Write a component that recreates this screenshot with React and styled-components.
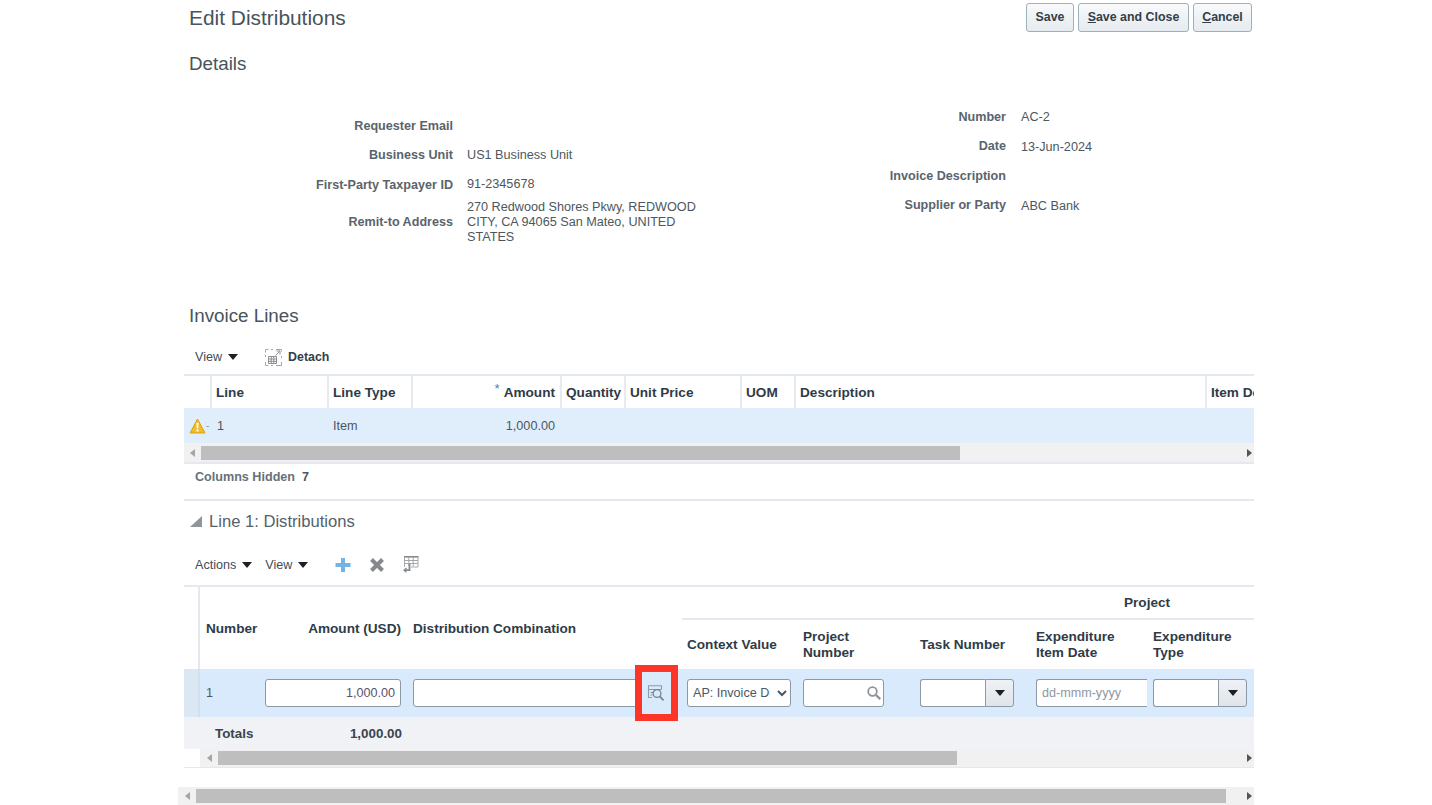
import React from 'react'
import styled, { createGlobalStyle } from 'styled-components'

const GlobalStyle = createGlobalStyle`
  html, body {
    margin: 0;
    background: #fff;
    overflow: hidden;
  }
  body {
    font-family: "Liberation Sans", Arial, sans-serif;
  }
`

const Page = styled.div`
  position: relative;
  width: 1070px;
  height: 805px;
  margin-left: 184px;
`

const Header = styled.header`
  display: flex;
  align-items: flex-start;
  justify-content: space-between;
  height: 36px;
  padding: 3px 2px 0 5px;
  box-sizing: border-box;
`

const Title = styled.h1`
  margin: 0;
  font-size: 20.9px;
  line-height: 30px;
  font-weight: 400;
  color: #48535c;
`

const ButtonRow = styled.div`
  display: flex;
  gap: 4px;
`

const Button = styled.button`
  width: ${p => p.$width}px;
  height: 29px;
  padding: 0 0 1px;
  border: 1px solid #9fb0bd;
  border-radius: 3px;
  background: linear-gradient(#f8fafb, #e6ebef);
  color: #333e48;
  font: 700 12.4px "Liberation Sans", Arial, sans-serif;
  u { text-decoration: underline; }
`

const SectionTitle = styled.h2`
  display: flex;
  align-items: center;
  height: 28px;
  margin: ${p => p.$top || 0}px 0 0;
  padding-left: 5px;
  font-size: 18.8px;
  font-weight: 400;
  color: #48535c;
`

const FormGrid = styled.div`
  display: flex;
  height: 200px;
  margin-top: 24px;
`

const FormColumn = styled.div`
  display: grid;
  grid-template-columns: ${p => p.$label}px ${p => p.$value}px;
  grid-auto-rows: min-content;
  column-gap: ${p => p.$gap || 14}px;
  padding-top: ${p => p.$top || 0}px;
  align-items: center;
`

const FormLabel = styled.div`
  min-height: 29.5px;
  display: flex;
  align-items: center;
  justify-content: flex-end;
  font-size: 12.6px;
  font-weight: 700;
  color: #5a646c;
`

const FormValue = styled.div`
  padding-top: ${p => p.$drop || 0}px;
  font-size: 12.65px;
  line-height: 15px;
  color: #4c5760;
`

const Toolbar = styled.div`
  display: flex;
  align-items: center;
  height: 34px;
  margin-top: ${p => p.$top || 0}px;
  padding-left: 11px;
  font-size: 12.6px;
  color: #414d57;
`

const MenuItem = styled.span`
  display: inline-flex;
  align-items: center;
  margin-right: ${p => p.$gap || 13}px;
  &::after {
    content: '';
    margin-left: ${p => p.$arrow || 6}px;
    border-left: 5px solid transparent;
    border-right: 5px solid transparent;
    border-top: 6px solid #1d1f22;
  }
`

const ToolLabel = styled.span`
  margin-left: 6px;
  font-weight: 700;
  font-size: 12.4px;
  color: #333e48;
`

const ToolIcon = styled.svg`
  display: block;
  flex: none;
  margin-right: ${p => p.$gap || 0}px;
`

const InvoiceTable = styled.div`
  border-top: 2px solid #e3e9ee;
`

const invoiceColumns = '26px 117px 84px 149px 64px 116px 54px 411px 49px'

const InvoiceHead = styled.div`
  display: grid;
  grid-template-columns: ${invoiceColumns};
  height: 32px;
  overflow: hidden;
`

const HeadCell = styled.div`
  display: flex;
  align-items: center;
  justify-content: ${p => (p.$right ? 'flex-end' : 'flex-start')};
  padding: 0 5px 0 ${p => p.$pad ?? 4}px;
  border-left: ${p => (p.$first ? 0 : '2px solid #e6ebf0')};
  font-size: 13.6px;
  font-weight: 700;
  color: #2f3b47;
  white-space: nowrap;
  overflow: hidden;
`

const Star = styled.span`
  margin: 0 4px 8px 0;
  color: #3d8ac9;
  font-size: 13px;
  font-weight: 400;
  line-height: 1;
`

const InvoiceRow = styled.div`
  display: grid;
  grid-template-columns: ${invoiceColumns};
  align-items: center;
  height: 35px;
  background: #e0edfa;
`

const BodyCell = styled.div`
  padding: 0 5px 0 ${p => p.$pad ?? 5}px;
  text-align: ${p => (p.$right ? 'right' : 'left')};
  font-size: 12.65px;
  color: #4c5760;
`

const WarnCell = styled.div`
  display: flex;
  align-items: center;
  padding-left: 5px;
  color: #8a96a0;
  font-size: 10px;
`

const ScrollTrack = styled.div`
  display: flex;
  align-items: center;
  height: ${p => p.$height || 18}px;
  margin-left: ${p => p.$left || 0}px;
  background: #f1f1f1;
`

const ScrollArrow = styled.span`
  flex: none;
  display: flex;
  justify-content: center;
  width: ${p => p.$width}px;
  margin-left: ${p => (p.$push ? 'auto' : 0)};
  &::before {
    content: '';
    border-top: 4px solid transparent;
    border-bottom: 4px solid transparent;
    border-${p => (p.$dir === 'left' ? 'right' : 'left')}: 5px solid ${p => (p.$dir === 'left' ? '#a5a5a5' : '#555')};
  }
`

const ScrollThumb = styled.span`
  flex: none;
  width: ${p => p.$width}px;
  height: 14px;
  background: #bebebe;
`

const TableEnd = styled.div`
  border-top: ${p => p.$size || 2}px solid #e3e9ee;
`

const HiddenNote = styled.div`
  display: flex;
  align-items: center;
  height: 26px;
  padding: 0 0 9px 11px;
  margin-bottom: 5px;
  border-bottom: 2px solid #e3e9ee;
  font-size: 12.6px;
  font-weight: 700;
  color: #66717a;
  span { margin-left: 7px; color: #4c5760; }
`

const CollapseTitle = styled.div`
  display: flex;
  align-items: center;
  box-sizing: border-box;
  height: 30px;
  padding: 1px 0 0 6px;
  font-size: 16.6px;
  color: #56616a;
`

const CollapseArrow = styled.span`
  width: 0;
  height: 0;
  margin-right: 7px;
  border-left: 12px solid transparent;
  border-bottom: 11px solid #8e959b;
`

const distColumns = '16px 62px 145px 275px 116px 117px 116px 117px 106px'

const DistTable = styled.div`
  margin-top: 3px;
  border-top: 2px solid #e3e9ee;
`

const DistHead = styled.div`
  display: grid;
  grid-template-columns: ${distColumns};
  grid-template-rows: 33px 49px;
`

const SelectHeadGap = styled.div`
  grid-row: 1 / 3;
  border-right: 2px solid #e3e9ee;
`

const TallHead = styled.div`
  grid-row: 1 / 3;
  display: flex;
  align-items: center;
  justify-content: ${p => (p.$right ? 'flex-end' : 'flex-start')};
  padding: 0 ${p => (p.$right ? 6 : 0)}px 0 6px;
  font-size: 13.6px;
  font-weight: 700;
  color: #2f3b47;
`

const GroupHead = styled.div`
  grid-column: 5 / 10;
  display: flex;
  align-items: center;
  padding-left: 442px;
  border-bottom: 2px solid #e3e9ee;
  font-size: 13.6px;
  font-weight: 700;
  color: #2f3b47;
`

const SubHead = styled.div`
  display: flex;
  align-items: center;
  padding: 1px 2px 0 5px;
  font-size: 13.6px;
  line-height: 16px;
  font-weight: 700;
  color: #2f3b47;
`

const DistRow = styled.div`
  display: grid;
  grid-template-columns: ${distColumns};
  align-items: center;
  height: 48px;
  background: #d8eafb;
`

const SelectCell = styled.div`
  height: 100%;
  background: #dbe7f3;
  border-right: 2px solid #d3e0eb;
  box-sizing: border-box;
`

const RowNumber = styled.div`
  padding-left: 6px;
  font-size: 12.65px;
  color: #4c5760;
`

const FieldCell = styled.div`
  display: flex;
  align-items: center;
  padding-left: ${p => p.$pad ?? 5}px;
`

const TextInput = styled.input`
  box-sizing: border-box;
  width: ${p => p.$width}px;
  height: 28px;
  padding: 0 5px;
  border: 1px solid #8b9aa6;
  border-right: ${p => (p.$open ? 0 : '1px solid #8b9aa6')};
  border-radius: ${p => (p.$open ? '3px 0 0 3px' : '3px')};
  background: #fff;
  font: 12.6px "Liberation Sans", Arial, sans-serif;
  color: #5b5266;
  text-align: ${p => (p.$right ? 'right' : 'left')};
  &::placeholder { color: #8f979e; opacity: 1; }
`

const NativeSelect = styled.select`
  box-sizing: border-box;
  width: 104px;
  height: 28px;
  padding: 0 4px 0 1px;
  border: 1px solid #8b9aa6;
  border-radius: 3px;
  background: #fff;
  font: 12.6px "Liberation Sans", Arial, sans-serif;
  color: #4c5760;
`

const SearchBox = styled.div`
  position: relative;
  width: 81px;
`

const SearchGlyph = styled.svg`
  position: absolute;
  top: 6px;
  right: 2px;
`

const Combo = styled.div`
  display: flex;
  width: 94px;
  height: 28px;
`

const ComboButton = styled.span`
  box-sizing: border-box;
  flex: none;
  display: flex;
  align-items: center;
  justify-content: center;
  width: 29px;
  border: 1px solid #8b9aa6;
  border-radius: 0 3px 3px 0;
  background: linear-gradient(#eef2f5, #dfe5ea);
  &::before {
    content: '';
    border-left: 5px solid transparent;
    border-right: 5px solid transparent;
    border-top: 6px solid #1d1f22;
  }
`

const LovButton = styled.svg`
  flex: none;
  margin-left: 8px;
`

const TotalsRow = styled.div`
  display: grid;
  grid-template-columns: ${distColumns};
  align-items: center;
  height: 32px;
  background: #f1f2f6;
  font-size: 13.4px;
  font-weight: 700;
  color: #3b444c;
`

const TotalsLabel = styled.div`
  grid-column: 1 / 3;
  padding-left: 31px;
`

const TotalsValue = styled.div`
  text-align: right;
  padding-right: 5px;
`

const PageScroll = styled.div`
  margin: 19px 0 0 -6px;
`

const Highlight = styled.div`
  position: absolute;
  left: 451px;
  top: 665px;
  width: 43px;
  height: 56px;
  box-sizing: border-box;
  border: 7px solid #fb3527;
  pointer-events: none;
`

const DetachIcon = () => (
  <ToolIcon width="17" height="17" viewBox="0 0 17 17" fill="none">
    <path d="M.5 3.5v-3h3M6 .5h2M.5 6v2M.5 13v3.5h3M6 16.5h2M11 16.5h5.5V13M16.5 9V7M11 .5h5.5v2" stroke="#a4a8ac" strokeWidth="1" />
    <path d="M10.5 6.5l4-4M11.5 2h3.500v3.500" stroke="#8d9296" strokeWidth="1" />
    <path d="M3.5 7.5h8v7h-8zM3.5 10h8M3.5 12.3h8M6.2 7.5v7M8.8 7.5v7" stroke="#7f858a" strokeWidth="0.9" />
  </ToolIcon>
)

const WarningIcon = () => (
  <svg width="17" height="16" viewBox="0 0 17 16">
    <path d="M8.5 1 16 15H1z" fill="#f1bd26" stroke="#d9a114" strokeWidth="1" strokeLinejoin="round" />
    <path d="M7.4 4.8h2.2l-.4 5.6H7.8zM7.5 11.4h2v2h-2z" fill="#fff" />
  </svg>
)

const PlusIcon = () => (
  <ToolIcon $gap={18} width="16" height="16" viewBox="0 0 16 16">
    <path d="M6 1h4v5h5.5v4H10v5H6v-5H.5V6H6z" fill="#74b3e6" />
  </ToolIcon>
)

const CloseIcon = () => (
  <ToolIcon $gap={18} width="16" height="16" viewBox="0 0 16 16">
    <path d="M2.5 2.5l11 11M13.5 2.5l-11 11" stroke="#85898d" strokeWidth="4" />
  </ToolIcon>
)

const FreezeIcon = () => (
  <ToolIcon width="16" height="18" viewBox="0 0 16 18" fill="none">
    <path d="M1 .8h14.500" stroke="#85898d" strokeWidth="1.6" />
    <path d="M1.5 1v10M15 1v10M1.5 4.5H15M1.5 7.5H15M5.8 1v9M10.2 1v9M8 11H15" stroke="#a3a7ab" strokeWidth="1" />
    <path d="M6.5 8v6.2H1.5" stroke="#85898d" strokeWidth="1.8" />
    <path d="M3.5 12l-2.5 2.2 2.5 2.2" stroke="#85898d" strokeWidth="1.2" />
  </ToolIcon>
)

const LovIcon = () => (
  <LovButton width="18" height="17" viewBox="0 0 18 17" fill="none">
    <path d="M5 12.5H1.5V.8h13v3.5" stroke="#8f9aa3" strokeWidth="1.1" />
    <path d="M1.5 4.5h13M3.5 7.5H6M3.5 10H5.5" stroke="#8f9aa3" strokeWidth="1.1" />
    <circle cx="10" cy="8.5" r="3.9" stroke="#77828b" strokeWidth="1.3" />
    <path d="M12.8 11.3l3.7 4" stroke="#77828b" strokeWidth="1.7" />
  </LovButton>
)

const SearchIcon = () => (
  <SearchGlyph width="16" height="16" viewBox="0 0 16 16" fill="none">
    <circle cx="6.5" cy="6.5" r="4.3" stroke="#8d959b" strokeWidth="1.8" />
    <path d="M10 10l4.2 4.2" stroke="#8d959b" strokeWidth="2.4" />
  </SearchGlyph>
)

const Scrollbar = ({ left, lead, thumb, height }) => (
  <ScrollTrack $left={left} $height={height}>
    <ScrollArrow $dir="left" $width={lead} />
    <ScrollThumb $width={thumb} />
    <ScrollArrow $dir="right" $width={10} $push />
  </ScrollTrack>
)

const ComboField = () => (
  <Combo>
    <TextInput $width={65} $open />
    <ComboButton />
  </Combo>
)

export default function App() {
  return (
    <Page>
      <GlobalStyle />
      <Header>
        <Title>Edit Distributions</Title>
        <ButtonRow>
          <Button $width={48}>Save</Button>
          <Button $width={111}><u>S</u>ave and Close</Button>
          <Button $width={59}><u>C</u>ancel</Button>
        </ButtonRow>
      </Header>

      <SectionTitle $top={14}>Details</SectionTitle>

      <FormGrid>
        <FormColumn $label={269} $value={236} $top={9}>
          <FormLabel>Requester Email</FormLabel>
          <FormValue />
          <FormLabel>Business Unit</FormLabel>
          <FormValue>US1 Business Unit</FormValue>
          <FormLabel>First-Party Taxpayer ID</FormLabel>
          <FormValue>91-2345678</FormValue>
          <FormLabel>Remit-to Address</FormLabel>
          <FormValue>270 Redwood Shores Pkwy, REDWOOD CITY, CA 94065 San Mateo, UNITED STATES</FormValue>
        </FormColumn>
        <FormColumn $label={303} $value={200} $gap={15}>
          <FormLabel>Number</FormLabel>
          <FormValue $drop={2}>AC-2</FormValue>
          <FormLabel>Date</FormLabel>
          <FormValue $drop={2}>13-Jun-2024</FormValue>
          <FormLabel>Invoice Description</FormLabel>
          <FormValue />
          <FormLabel>Supplier or Party</FormLabel>
          <FormValue $drop={2}>ABC Bank</FormValue>
        </FormColumn>
      </FormGrid>

      <SectionTitle>Invoice Lines</SectionTitle>

      <Toolbar $top={10}>
        <MenuItem $gap={27}>View</MenuItem>
        <DetachIcon />
        <ToolLabel>Detach</ToolLabel>
      </Toolbar>

      <InvoiceTable>
        <InvoiceHead>
          <HeadCell $first />
          <HeadCell>Line</HeadCell>
          <HeadCell>Line Type</HeadCell>
          <HeadCell $right><Star>*</Star>Amount</HeadCell>
          <HeadCell>Quantity</HeadCell>
          <HeadCell>Unit Price</HeadCell>
          <HeadCell>UOM</HeadCell>
          <HeadCell>Description</HeadCell>
          <HeadCell>Item Description</HeadCell>
        </InvoiceHead>
        <InvoiceRow>
          <WarnCell><WarningIcon />-</WarnCell>
          <BodyCell $pad={7}>1</BodyCell>
          <BodyCell $pad={6}>Item</BodyCell>
          <BodyCell $right>1,000.00</BodyCell>
        </InvoiceRow>
        <Scrollbar lead={17} thumb={759} height={19} />
      </InvoiceTable>
      <TableEnd />

      <HiddenNote>Columns Hidden<span>7</span></HiddenNote>

      <CollapseTitle><CollapseArrow />Line 1: Distributions</CollapseTitle>

      <Toolbar $top={12}>
        <MenuItem>Actions</MenuItem>
        <MenuItem $gap={27}>View</MenuItem>
        <PlusIcon />
        <CloseIcon />
        <FreezeIcon />
      </Toolbar>

      <DistTable>
        <DistHead>
          <SelectHeadGap />
          <TallHead>Number</TallHead>
          <TallHead $right>Amount (USD)</TallHead>
          <TallHead>Distribution Combination</TallHead>
          <GroupHead>Project</GroupHead>
          <SubHead>Context Value</SubHead>
          <SubHead>Project<br />Number</SubHead>
          <SubHead>Task Number</SubHead>
          <SubHead>Expenditure<br />Item Date</SubHead>
          <SubHead>Expenditure<br />Type</SubHead>
        </DistHead>
        <DistRow>
          <SelectCell />
          <RowNumber>1</RowNumber>
          <FieldCell $pad={3}><TextInput $width={136} $right defaultValue="1,000.00" /></FieldCell>
          <FieldCell $pad={6}>
            <TextInput $width={226} />
            <LovIcon />
          </FieldCell>
          <FieldCell>
            <NativeSelect defaultValue="ap">
              <option value="ap">AP: Invoice Distributions</option>
            </NativeSelect>
          </FieldCell>
          <FieldCell>
            <SearchBox>
              <TextInput $width={81} />
              <SearchIcon />
            </SearchBox>
          </FieldCell>
          <FieldCell><ComboField /></FieldCell>
          <FieldCell><TextInput $width={111} $open placeholder="dd-mmm-yyyy" /></FieldCell>
          <FieldCell><ComboField /></FieldCell>
        </DistRow>
        <TotalsRow>
          <TotalsLabel>Totals</TotalsLabel>
          <TotalsValue>1,000.00</TotalsValue>
        </TotalsRow>
        <Scrollbar left={16} lead={18} thumb={739} />
      </DistTable>
      <TableEnd $size={1} />

      <PageScroll>
        <Scrollbar lead={18} thumb={1030} />
      </PageScroll>

      <Highlight />
    </Page>
  )
}
